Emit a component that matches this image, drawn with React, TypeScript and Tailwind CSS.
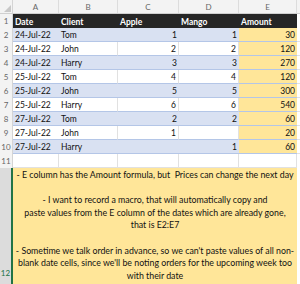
const cols = ["w-[46px]", "w-[59px]", "w-[61px]", "w-[60px]", "w-[58px]"];

const data = [
  ["24-Jul-22", "Tom", "1", "1", "30"],
  ["24-Jul-22", "John", "2", "2", "120"],
  ["24-Jul-22", "Harry", "3", "3", "270"],
  ["25-Jul-22", "Tom", "4", "4", "120"],
  ["25-Jul-22", "John", "5", "5", "300"],
  ["25-Jul-22", "Harry", "6", "6", "540"],
  ["27-Jul-22", "Tom", "2", "2", "60"],
  ["27-Jul-22", "John", "1", "", "20"],
  ["27-Jul-22", "Harry", "", "1", "60"],
];

function RowNum({ n }: { n: number }) {
  return (
    <div className="w-[13px] shrink-0 bg-[#f3f3f3] border-r border-[#d4d4d4] text-[#666] text-[8px] flex items-center justify-center">
      {n}
    </div>
  );
}

function DataRow({ n, cells }: { n: number; cells: string[] }) {
  const band = n % 2 === 0;
  return (
    <div className="flex h-[14px]">
      <RowNum n={n} />
      {cells.map((c, i) => {
        const isAmount = i === 4;
        const bg = isAmount ? "bg-[#ffe699]" : band ? "bg-[#d9e1f2]" : "bg-white";
        const align = i >= 2 ? "justify-end pr-[2px]" : "justify-start pl-[2px]";
        const grid = !band && !isAmount && i >= 1 ? "border-r border-[#e1e1e1]" : "";
        return (
          <div
            key={i}
            className={`${cols[i]} shrink-0 ${bg} ${align} ${grid} flex items-center pt-[1px] border-b border-b-[#b4c6e7] text-[#111] box-border`}
          >
            {c}
          </div>
        );
      })}
      <div className="w-[3px] bg-white border-b border-[#e1e1e1]" />
    </div>
  );
}

export default function App() {
  return (
    <div
      className="w-[300px] h-[284px] overflow-hidden bg-white text-[8.5px] leading-[14px]"
      style={{ fontFamily: "Lato, 'Liberation Sans', sans-serif" }}
    >
      {/* column letters */}
      <div className="flex h-[14px] bg-[#f3f3f3] border-b border-[#d0d0d0] text-[#666] text-[8px]">
        <div className="w-[13px] shrink-0 border-r border-[#d4d4d4] relative">
          <div className="absolute right-[1px] bottom-[1px] w-0 h-0 border-l-[7px] border-l-transparent border-b-[7px] border-b-[#c8c8c8]" />
        </div>
        {["A", "B", "C", "D", "E"].map((l, i) => (
          <div key={l} className={`${cols[i]} shrink-0 border-r border-[#dcdcdc] flex items-center justify-center`}>
            {l}
          </div>
        ))}
      </div>
      {/* header row */}
      <div className="flex h-[14px]">
        <RowNum n={1} />
        {["Date", "Client", "Apple", "Mango", "Amount"].map((h, i) => (
          <div key={h} className={`${cols[i]} shrink-0 bg-[#262626] text-white font-bold pl-[2px] pt-[1px] flex items-center`}>
            {h}
          </div>
        ))}
        <div className="w-[3px] bg-white" />
      </div>
      {data.map((r, i) => (
        <DataRow key={i} n={i + 2} cells={r} />
      ))}
      {/* row 11 */}
      <div className="flex h-[14px]">
        <RowNum n={11} />
        {cols.map((w, i) => (
          <div key={i} className={`${w} shrink-0 border-r border-b border-[#e1e1e1]`} />
        ))}
      </div>
      {/* row 12 */}
      <div className="flex h-[120px]">
        <div className="w-[13px] shrink-0 bg-[#dcdcdc] border-r-2 border-[#217346] text-[#217346] text-[8px] flex items-end justify-center pb-[8px]">
          12
        </div>
        <div className="w-[284px] shrink-0 bg-[#ffe699] text-[#111] text-[8.8px] leading-[12.6px] text-center pt-[1px] whitespace-nowrap">
          <div>- E column has the Amount formula, but&nbsp; Prices can change the next day</div>
          <div>&nbsp;</div>
          <div>- I want to record a macro, that will automatically copy and</div>
          <div>paste values from the E column of the dates which are already gone,</div>
          <div>that is E2:E7</div>
          <div>&nbsp;</div>
          <div>- Sometime we talk order in advance, so we can't paste values of all non-</div>
          <div>blank date cells, since we'll be noting orders for the upcoming week too</div>
          <div>with their date</div>
        </div>
      </div>
    </div>
  );
}
